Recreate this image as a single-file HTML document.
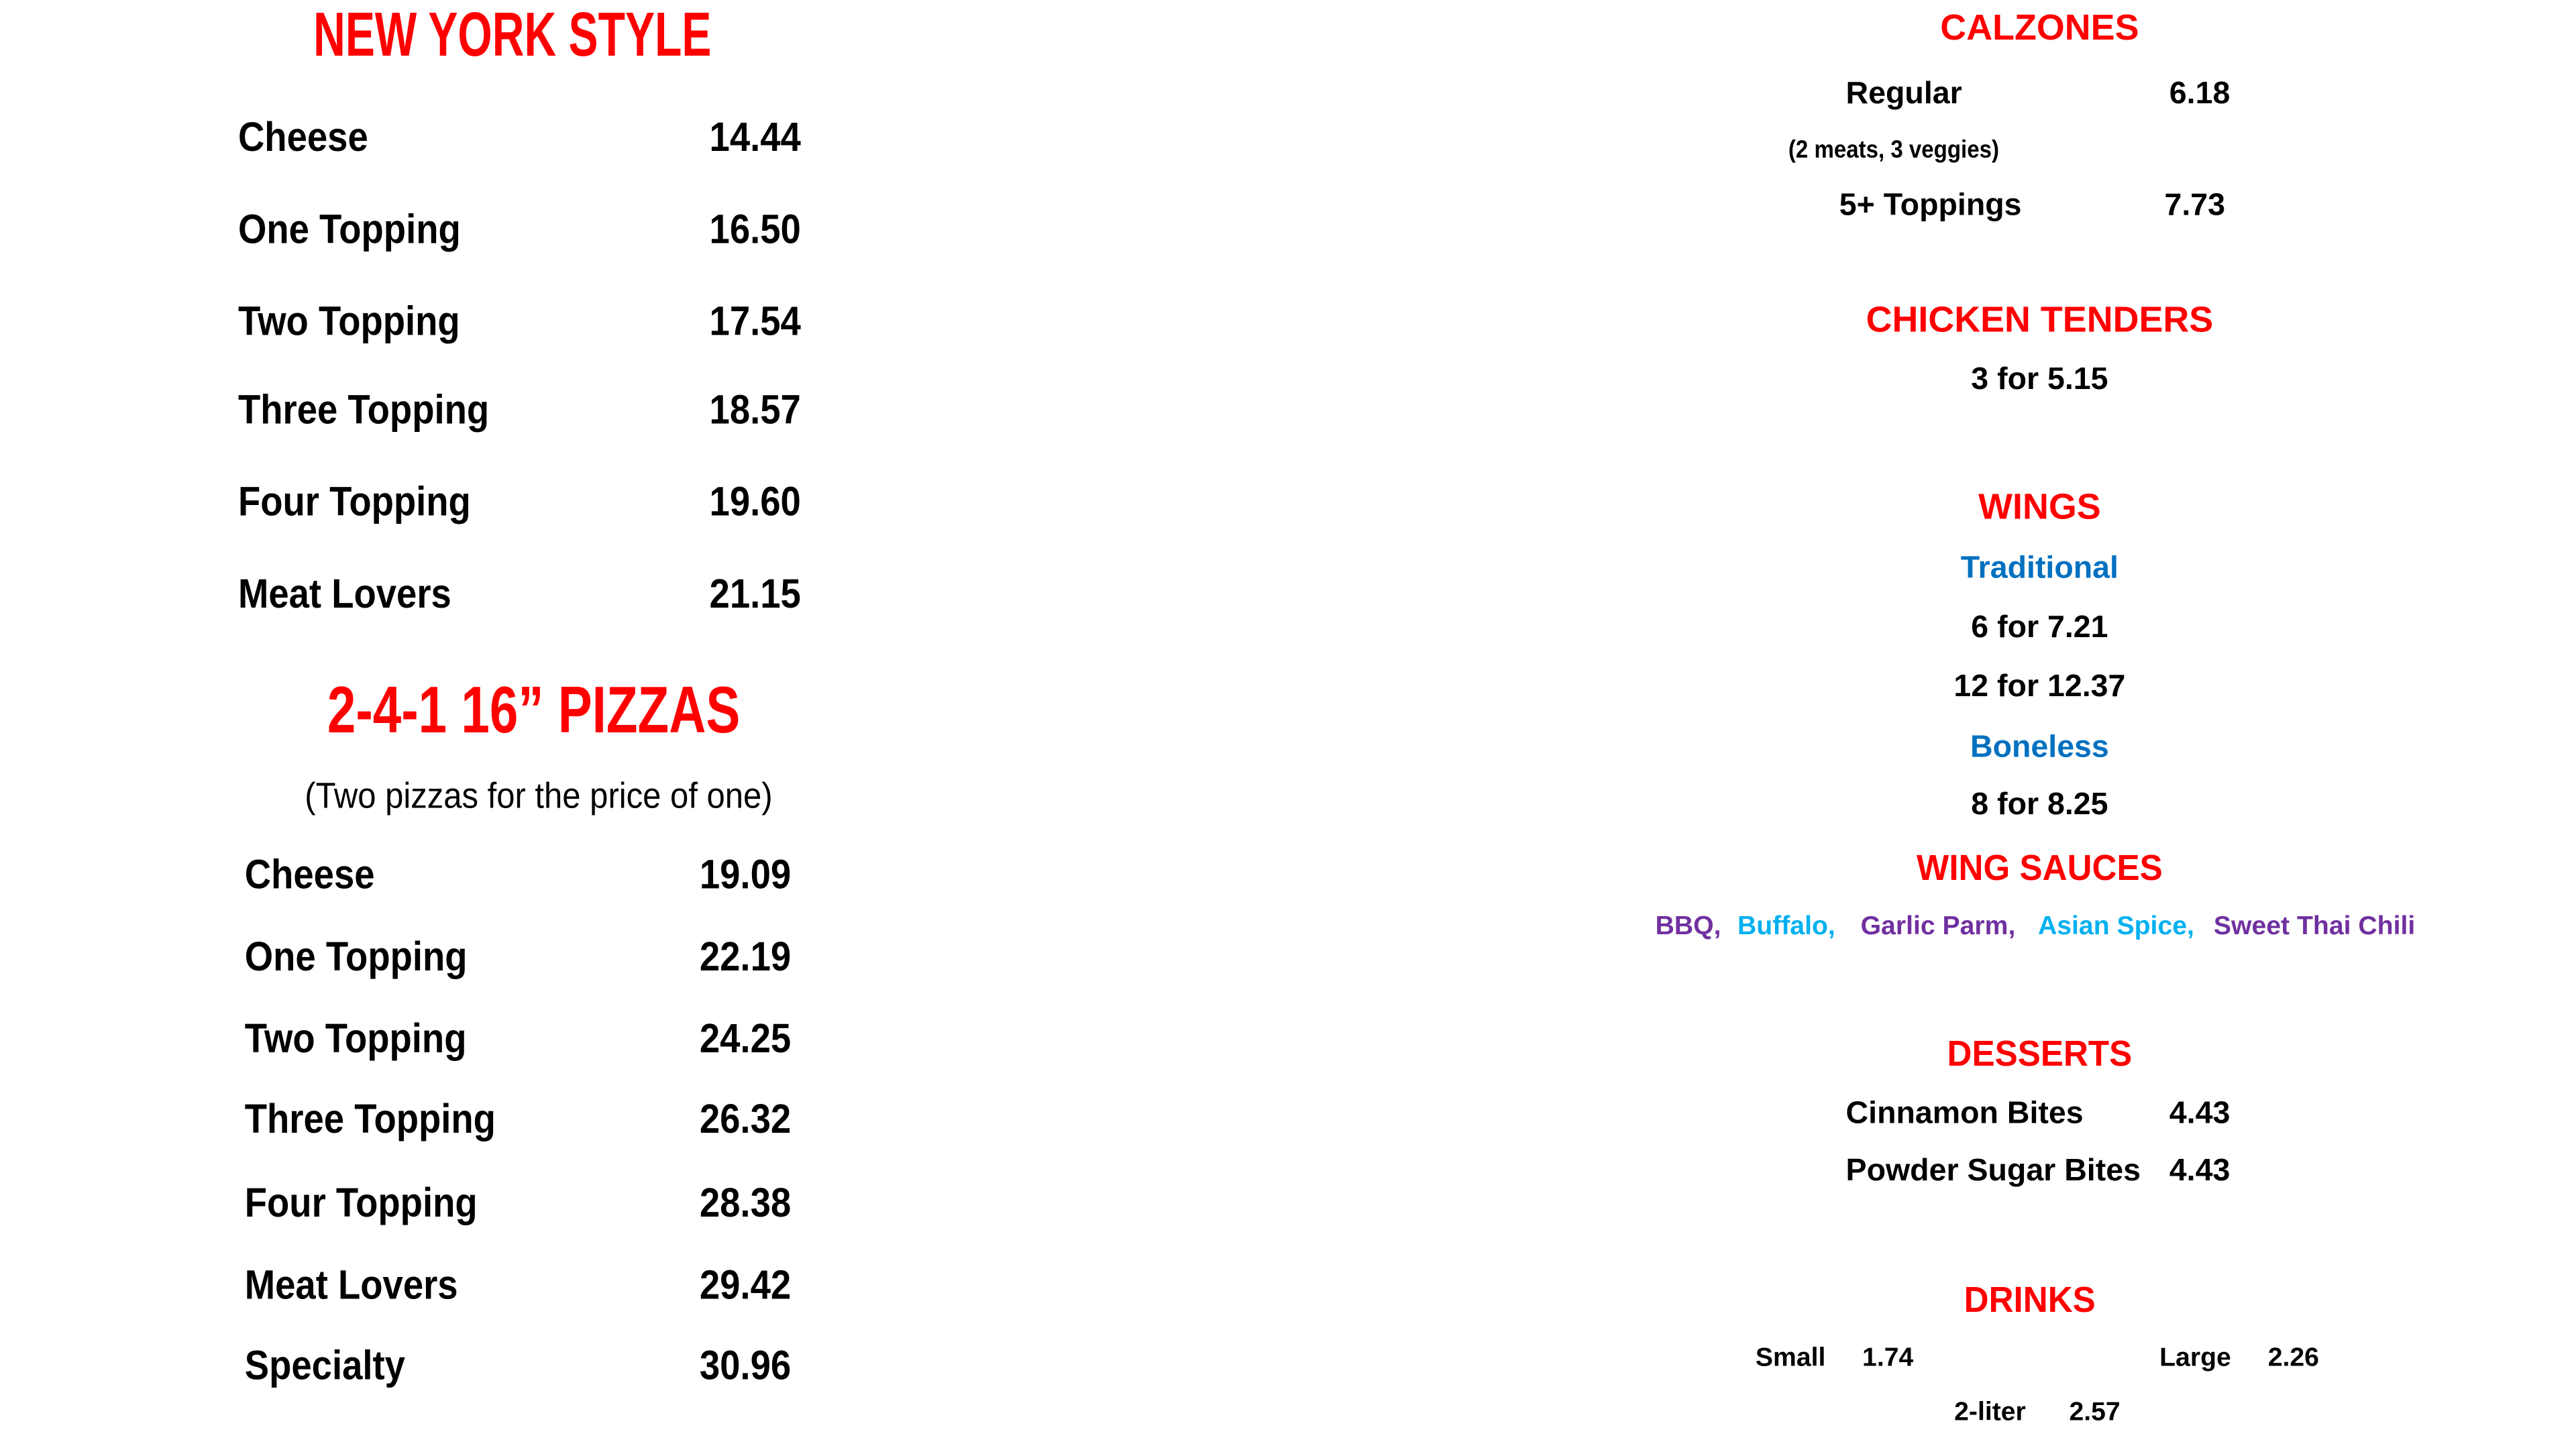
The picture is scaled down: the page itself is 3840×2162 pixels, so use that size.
<!DOCTYPE html>
<html><head><meta charset="utf-8"><style>
html,body{margin:0;padding:0;background:#fff;overflow:hidden}
#w{position:absolute;left:0;top:0;width:1569px;height:883px;transform:scale(2.448);transform-origin:0 0}
.t{position:absolute;white-space:nowrap;line-height:1;font-family:"Liberation Sans",Arial,sans-serif;font-weight:bold;color:#000;transform-origin:0 50%}
.c{width:800px;text-align:center;transform-origin:50% 50%}
.r{color:#ff0000}.b{color:#0070c0}.p{color:#7030a0}.cy{color:#00b0f0}
.n{transform:scaleX(.89)}
</style></head><body><div id="w">
<div class="t c r" style="left:-88px;top:3px;font-size:38px;transform:scaleX(.71)">NEW YORK STYLE</div>

<div class="t n" style="left:145px;top:72px;font-size:25px">Cheese</div>
<div class="t n" style="left:432px;top:72px;font-size:25px">14.44</div>
<div class="t n" style="left:145px;top:128px;font-size:25px">One Topping</div>
<div class="t n" style="left:432px;top:128px;font-size:25px">16.50</div>
<div class="t n" style="left:145px;top:184px;font-size:25px">Two Topping</div>
<div class="t n" style="left:432px;top:184px;font-size:25px">17.54</div>
<div class="t n" style="left:145px;top:238px;font-size:25px">Three Topping</div>
<div class="t n" style="left:432px;top:238px;font-size:25px">18.57</div>
<div class="t n" style="left:145px;top:294px;font-size:25px">Four Topping</div>
<div class="t n" style="left:432px;top:294px;font-size:25px">19.60</div>
<div class="t n" style="left:145px;top:350px;font-size:25px">Meat Lovers</div>
<div class="t n" style="left:432px;top:350px;font-size:25px">21.15</div>

<div class="t c r" style="left:-75px;top:413px;font-size:40px;transform:scaleX(.78)">2-4-1 16” PIZZAS</div>
<div class="t c" style="left:-72px;top:474px;font-size:22px;font-weight:normal;transform:scaleX(.91)">(Two pizzas for the price of one)</div>

<div class="t n" style="left:149px;top:521px;font-size:25px">Cheese</div>
<div class="t n" style="left:426px;top:521px;font-size:25px">19.09</div>
<div class="t n" style="left:149px;top:571px;font-size:25px">One Topping</div>
<div class="t n" style="left:426px;top:571px;font-size:25px">22.19</div>
<div class="t n" style="left:149px;top:621px;font-size:25px">Two Topping</div>
<div class="t n" style="left:426px;top:621px;font-size:25px">24.25</div>
<div class="t n" style="left:149px;top:670px;font-size:25px">Three Topping</div>
<div class="t n" style="left:426px;top:670px;font-size:25px">26.32</div>
<div class="t n" style="left:149px;top:721px;font-size:25px">Four Topping</div>
<div class="t n" style="left:426px;top:721px;font-size:25px">28.38</div>
<div class="t n" style="left:149px;top:771px;font-size:25px">Meat Lovers</div>
<div class="t n" style="left:426px;top:771px;font-size:25px">29.42</div>
<div class="t n" style="left:149px;top:820px;font-size:25px">Specialty</div>
<div class="t n" style="left:426px;top:820px;font-size:25px">30.96</div>

<div class="t c r" style="left:842px;top:6px;font-size:22px">CALZONES</div>
<div class="t" style="left:1124px;top:48px;font-size:19px">Regular</div>
<div class="t" style="left:1321px;top:48px;font-size:19px">6.18</div>
<div class="t" style="left:1089px;top:84px;font-size:15px;transform:scaleX(.9)">(2 meats, 3 veggies)</div>
<div class="t" style="left:1120px;top:116px;font-size:19px">5+ Toppings</div>
<div class="t" style="left:1318px;top:116px;font-size:19px">7.73</div>

<div class="t c r" style="left:842px;top:184px;font-size:22px">CHICKEN TENDERS</div>
<div class="t c" style="left:842px;top:222px;font-size:19px">3 for 5.15</div>

<div class="t c r" style="left:842px;top:298px;font-size:22px">WINGS</div>
<div class="t c b" style="left:842px;top:337px;font-size:19px">Traditional</div>
<div class="t c" style="left:842px;top:373px;font-size:19px">6 for 7.21</div>
<div class="t c" style="left:842px;top:409px;font-size:19px">12 for 12.37</div>
<div class="t c b" style="left:842px;top:446px;font-size:19px">Boneless</div>
<div class="t c" style="left:842px;top:481px;font-size:19px">8 for 8.25</div>
<div class="t c r" style="left:842px;top:518px;font-size:22px;transform:scaleX(.95)">WING SAUCES</div>

<div class="t p" style="left:1008px;top:557px;font-size:16px">BBQ,</div>
<div class="t cy" style="left:1058px;top:557px;font-size:16px">Buffalo,</div>
<div class="t p" style="left:1133px;top:557px;font-size:16px">Garlic Parm,</div>
<div class="t cy" style="left:1241px;top:557px;font-size:16px">Asian Spice,</div>
<div class="t p" style="left:1348px;top:557px;font-size:16px">Sweet Thai Chili</div>

<div class="t c r" style="left:842px;top:631px;font-size:22px;transform:scaleX(.95)">DESSERTS</div>
<div class="t" style="left:1124px;top:669px;font-size:19px">Cinnamon Bites</div>
<div class="t" style="left:1321px;top:669px;font-size:19px">4.43</div>
<div class="t" style="left:1124px;top:704px;font-size:19px">Powder Sugar Bites</div>
<div class="t" style="left:1321px;top:704px;font-size:19px">4.43</div>

<div class="t c r" style="left:836px;top:781px;font-size:22px;transform:scaleX(.95)">DRINKS</div>
<div class="t" style="left:1069px;top:820px;font-size:16px">Small</div>
<div class="t" style="left:1134px;top:820px;font-size:16px">1.74</div>
<div class="t" style="left:1315px;top:820px;font-size:16px">Large</div>
<div class="t" style="left:1381px;top:820px;font-size:16px">2.26</div>
<div class="t" style="left:1190px;top:853px;font-size:16px">2-liter</div>
<div class="t" style="left:1260px;top:853px;font-size:16px">2.57</div>
</div></body></html>
